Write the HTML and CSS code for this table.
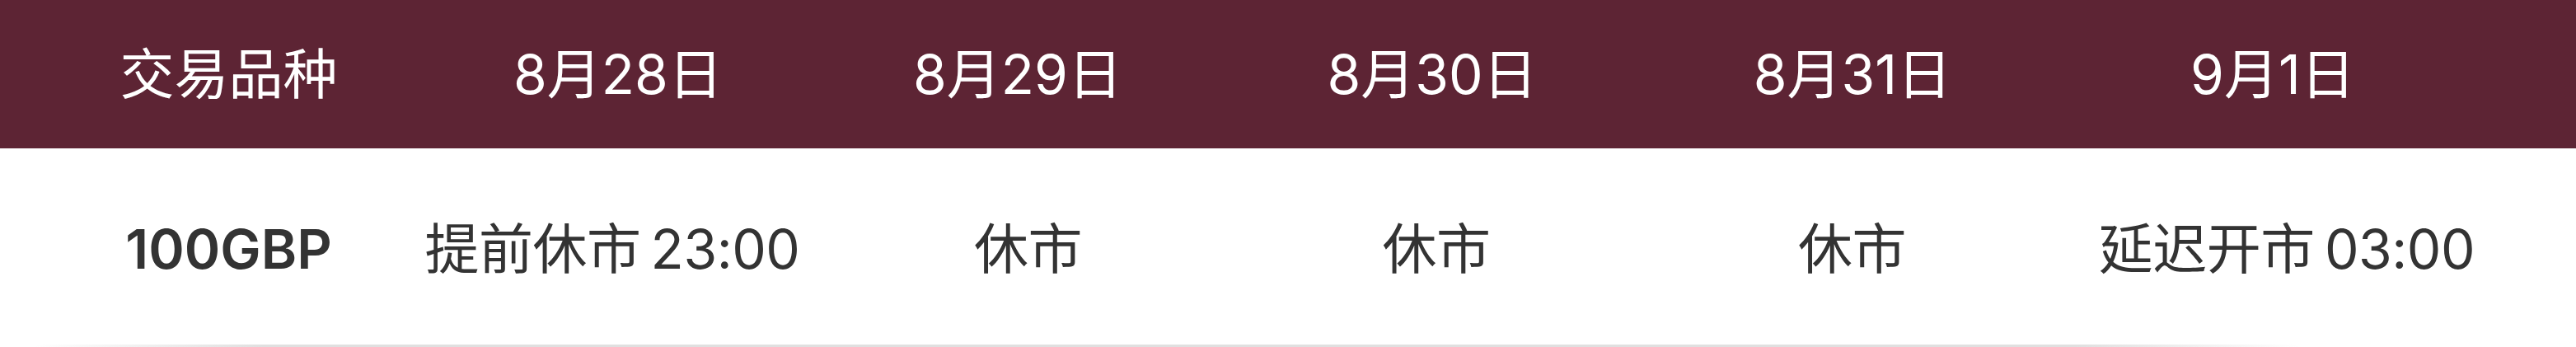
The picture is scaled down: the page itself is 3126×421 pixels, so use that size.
FILE: index.html
```html
<!DOCTYPE html>
<html lang="zh-CN">
<head>
<meta charset="utf-8">
<title>交易时间调整</title>
<link rel="stylesheet" href="styles.css">
</head>
<body>
<div class="schedule">
  <div class="row head">
    <div class="cell">交易品种</div>
    <div class="cell">8月28日</div>
    <div class="cell">8月29日</div>
    <div class="cell">8月30日</div>
    <div class="cell">8月31日</div>
    <div class="cell">9月1日</div>
  </div>
  <div class="row body-row">
    <div class="cell symbol">100GBP</div>
    <div class="cell">提前休市 23:00</div>
    <div class="cell">休市</div>
    <div class="cell">休市</div>
    <div class="cell">休市</div>
    <div class="cell">延迟开市 03:00</div>
  </div>
  <div class="divider"></div>
</div>
</body>
</html>
```
FILE: styles.css
```css
html, body {
  margin: 0;
  padding: 0;
  background: #ffffff;
}
body {
  font-family: Inter, "Noto Sans CJK SC", sans-serif;
  font-size: 66px;
  line-height: 1;
}
.schedule {
  width: 3126px;
}
.row {
  display: grid;
  align-items: center;
  padding-left: 40px;
  box-sizing: border-box;
}
.cell {
  text-align: center;
  white-space: nowrap;
}
.head {
  height: 180px;
  background: #5d2434;
  color: #ffffff;
  grid-template-columns: 475px 470px 500px 506px 514px 506px;
}
.body-row {
  height: 238px;
  padding-top: 6px;
  color: #333333;
  word-spacing: -6px;
  letter-spacing: -0.5px;
  grid-template-columns: 475px 456px 553px 438px 571px 484px;
}
.symbol {
  font-weight: 600;
  letter-spacing: 0;
}
.divider {
  height: 3px;
  background: linear-gradient(to right, rgba(220,220,220,0) 40px, #e0e0e0 320px, #e0e0e0 2520px, rgba(220,220,220,0) 2790px);
}
```
